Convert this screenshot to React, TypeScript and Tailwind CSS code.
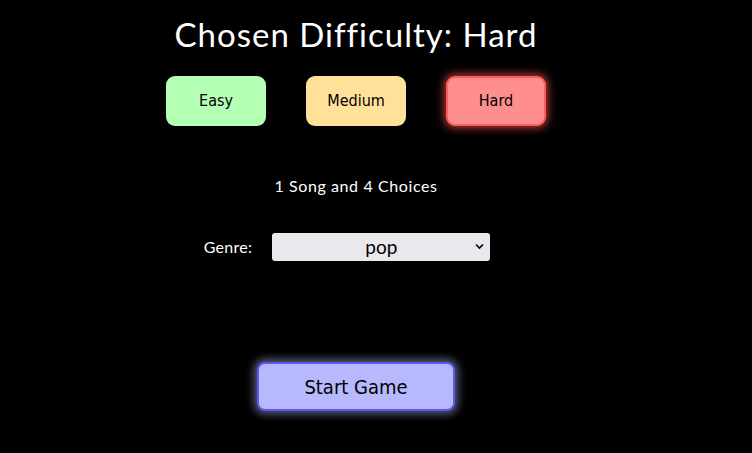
import { useState } from "react";

const levels = [
  { name: "Easy", cls: "bg-[#b3ffb3]" },
  { name: "Medium", cls: "bg-[#ffe199]" },
  { name: "Hard", cls: "bg-[#ff8f8f] border-2 border-[#ff5c5c] shadow-[0_0_8px_2px_rgba(255,80,80,0.7)]" },
];

export default function App() {
  const [genre, setGenre] = useState("pop");

  return (
    <div className="min-h-[453px] w-full bg-black text-white font-['Lato',sans-serif]">
      <div className="w-[712px] flex flex-col items-center">
        {/* Title */}
        <h1 className="mt-[14px] text-[33px] leading-[40px] tracking-[1px]">Chosen Difficulty: Hard</h1>

        {/* Difficulty buttons */}
        <div className="mt-[22px] flex gap-10">
          {levels.map((l) => (
            <button
              key={l.name}
              className={`w-[100px] h-[50px] rounded-[9px] text-black text-[16px] font-['DejaVu_Sans_Condensed','DejaVu_Sans',sans-serif] flex items-center justify-center ${l.cls}`}
            >
              {l.name}
            </button>
          ))}
        </div>

        <p className="mt-[50px] text-[16px] leading-5 tracking-[0.6px]">1 Song and 4 Choices</p>

        {/* Genre */}
        <div className="mt-[37px] flex items-center gap-5 -ml-[18px]">
          <span className="text-[16px] tracking-[0.3px]">Genre:</span>
          <div className="relative w-[218px] h-[28px]">
            <select
              value={genre}
              onChange={(e) => setGenre(e.target.value)}
              className="appearance-none w-full h-full rounded-[3px] bg-[#e9e8ed] text-black text-[19px] text-center font-['Lato',sans-serif] outline-none"
            >
              <option value="pop">pop</option>
              <option value="rock">rock</option>
              <option value="hip-hop">hip-hop</option>
            </select>
            <svg className="absolute right-[6px] top-[10px] pointer-events-none" width="9" height="7" viewBox="0 0 9 7">
              <path d="M1 1.5 L4.5 5 L8 1.5" fill="none" stroke="#000" strokeWidth="1.6" />
            </svg>
          </div>
        </div>

        {/* Start */}
        <button className="mt-[101px] w-[198px] h-[49px] rounded-[8px] bg-[#b8b8ff] border-2 border-[#5a5aee] text-black text-[20px] font-['DejaVu_Sans_Condensed','DejaVu_Sans',sans-serif] shadow-[0_0_8px_3px_rgba(150,150,220,0.6)]">
          Start Game
        </button>
      </div>
    </div>
  );
}
